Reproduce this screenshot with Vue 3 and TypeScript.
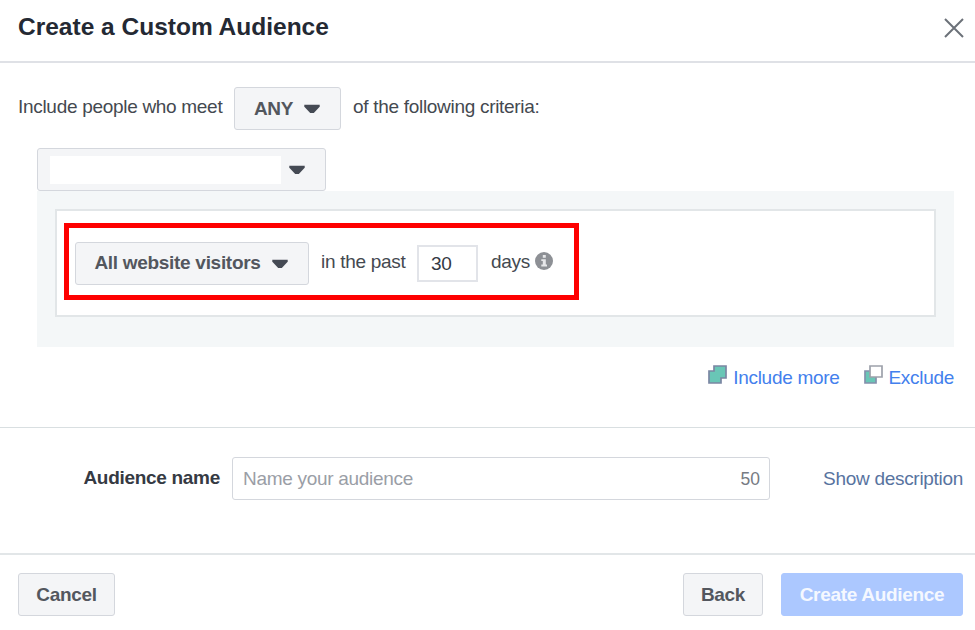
<template>
  <div class="dialog">
    <header class="header">
      <h1 class="title">Create a Custom Audience</h1>
      <button class="close" type="button" aria-label="Close">
        <svg width="20" height="20" viewBox="0 0 20 20">
          <path d="M1 1 19 19M19 1 1 19" stroke="#6c7179" stroke-width="2" fill="none" />
        </svg>
      </button>
    </header>

    <main class="criteria">
      <div class="match-row">
        <span class="copy match-before">Include people who meet</span>
        <button class="btn match-btn" type="button">
          <span>{{ matchMode }}</span>
          <svg class="caret" width="16" height="10" viewBox="0 0 16 10"><path :d="caretPath" /></svg>
        </button>
        <span class="copy">of the following criteria:</span>
      </div>

      <button class="btn source-btn" type="button" aria-label="Source">
        <span class="source-value"></span>
        <svg class="caret" width="16" height="10" viewBox="0 0 16 10"><path :d="caretPath" /></svg>
      </button>

      <section class="panel">
        <div class="rule-box">
          <div class="rule">
            <button class="btn visitors-btn" type="button">
              <span>All website visitors</span>
              <svg class="caret" width="16" height="10" viewBox="0 0 16 10"><path :d="caretPath" /></svg>
            </button>
            <span class="copy past">in the past</span>
            <input v-model="days" class="days-input" type="text" />
            <span class="copy days">days</span>
            <svg class="info" width="18" height="18" viewBox="0 0 18 18">
              <circle cx="9" cy="9" r="9" fill="#8d9095" />
              <path d="M7.8 3h3v2.7h-3zM6.3 7.2h4.5v5.4h1.2v1.8H6.3v-1.8h1.5V9H6.3z" fill="#e6e7e9" />
            </svg>
          </div>
        </div>
      </section>

      <div class="links">
        <a class="link include">
          <svg width="19" height="19" viewBox="0 0 19 19">
            <path d="M6 1h12v12h-5v5H1V6h5z" fill="#69c6b6" stroke="#7b86a3" stroke-width="1.7" />
          </svg>
          <span>Include more</span>
        </a>
        <a class="link exclude">
          <svg width="19" height="19" viewBox="0 0 19 19">
            <path d="M1 6h11v12H1z" fill="#69c6b6" stroke="#8490ac" stroke-width="1.7" />
            <path d="M6 1h12v11H6z" fill="#fff" stroke="#9da1ab" stroke-width="1.7" />
          </svg>
          <span>Exclude</span>
        </a>
      </div>
    </main>

    <section class="name-row">
      <label class="name-label" for="audience-name">Audience name</label>
      <div class="name-field">
        <input id="audience-name" v-model="name" class="name-input" placeholder="Name your audience" :maxlength="maxLength" />
        <span class="counter">{{ remaining }}</span>
      </div>
      <a class="description">Show description</a>
    </section>

    <footer class="footer">
      <button class="btn cancel" type="button">Cancel</button>
      <button class="btn back" type="button">Back</button>
      <button class="btn create" type="button">Create Audience</button>
    </footer>
  </div>
</template>

<script setup lang="ts">
import { ref, computed } from 'vue';

const maxLength = 50;
const caretPath = 'M.3.7h15.4v2L9.8 9H6.2L.3 2.7z';

const matchMode = ref<'ANY' | 'ALL'>('ANY');
const days = ref('30');
const name = ref('');

const remaining = computed(() => maxLength - name.value.length);
</script>

<style>
body {
  margin: 0;
  background: #fff;
}
</style>

<style scoped>
* {
  box-sizing: border-box;
}

.dialog {
  width: 975px;
  height: 630px;
  overflow: hidden;
  display: flex;
  flex-direction: column;
  background: #fff;
  color: #444950;
  font-family: "Liberation Sans", Arial, sans-serif;
  font-size: 19px;
  line-height: 22px;
  letter-spacing: -0.3px;
  white-space: nowrap;
}

button,
input {
  font: inherit;
  letter-spacing: inherit;
  margin: 0;
}

svg {
  display: block;
  flex: none;
}

.header {
  height: 63px;
  flex: none;
  display: flex;
  justify-content: space-between;
  padding: 12px 11px 0 18px;
  border-bottom: 2px solid #dfe1e6;
}

.title {
  margin: 0;
  font-size: 24.5px;
  line-height: 30px;
  letter-spacing: 0;
  color: #242933;
}

.close {
  width: 20px;
  height: 20px;
  margin-top: 6px;
  padding: 0;
  border: 0;
  background: none;
}

.criteria {
  height: 364px;
  flex: none;
  padding: 24px 21px 0 37px;
}

.match-row {
  display: flex;
  margin-left: -19px;
}

.match-row .copy {
  padding-top: 9px;
}

.match-before {
  width: 216px;
}

.btn {
  height: 43px;
  flex: none;
  display: flex;
  align-items: center;
  justify-content: center;
  padding: 0;
  border: 1px solid #d4d7dd;
  border-radius: 3px;
  background: #f4f5f7;
  color: #53575e;
  font-weight: bold;
}

.caret {
  fill: #454a54;
}

.match-btn {
  width: 107px;
  margin-right: 12px;
  padding-right: 1px;
  gap: 11px;
}

.source-btn {
  width: 289px;
  margin-top: 18px;
  padding-left: 12px;
  justify-content: flex-start;
  gap: 8px;
}

.source-value {
  width: 231px;
  height: 28px;
  margin-top: 1px;
  background: #fff;
}

.panel {
  height: 156px;
  padding: 18px;
  background: #f4f7f8;
}

.rule-box {
  width: 881px;
  height: 108px;
  padding: 12px 7px;
  border: 2px solid #e2e6e8;
  background: #fff;
}

.rule {
  width: 515px;
  height: 77px;
  display: flex;
  padding: 14px 6px 0;
  border: 5px solid #fe0000;
}

.visitors-btn {
  width: 234px;
  padding-right: 2px;
  gap: 11px;
}

.visitors-btn span {
  margin-top: -1px;
}

.rule .copy {
  padding-top: 9px;
}

.past {
  width: 96px;
  margin-left: 12px;
}

.days-input {
  width: 61px;
  height: 37px;
  margin-top: 3px;
  padding: 0 0 0 12px;
  border: 2px solid #e2e4e9;
  background: #fff;
  color: #343943;
}

.days {
  width: 44px;
  margin-left: 13px;
}

.info {
  margin-top: 10px;
}

.links {
  display: flex;
  justify-content: flex-end;
  gap: 24px;
  margin-top: 18px;
}

.link {
  display: flex;
  gap: 6px;
  color: #4380ed;
}

.link span {
  padding-top: 2px;
}

.name-row {
  height: 126px;
  flex: none;
  display: flex;
  padding: 29px 12px 0 18px;
  border-top: 1px solid #d9dfe1;
}

.name-label {
  width: 202px;
  padding-top: 10px;
  text-align: right;
  color: #353a43;
  font-weight: bold;
}

.name-field {
  width: 538px;
  height: 43px;
  display: flex;
  align-items: center;
  margin-left: 12px;
  padding: 0 9px 0 10px;
  border: 1px solid #d4d7dd;
  border-radius: 3px;
}

.name-input {
  flex: 1;
  padding: 0;
  border: 0;
  outline: none;
  background: none;
  color: #353a43;
}

.name-input::placeholder {
  color: #9a9ea6;
  opacity: 1;
}

.counter {
  font-size: 17.5px;
  letter-spacing: 0;
  color: #777b83;
}

.description {
  margin-left: auto;
  padding-top: 11px;
  color: #5873a0;
}

.footer {
  flex: 1;
  display: flex;
  padding: 18px 12px 0 18px;
  border-top: 2px solid #e2e6e8;
}

.cancel {
  width: 97px;
}

.back {
  width: 80px;
  margin-left: auto;
}

.create {
  width: 182px;
  margin-left: 18px;
  border-color: #acc8ff;
  background: #acc8ff;
  color: #f5f8ff;
}
</style>
